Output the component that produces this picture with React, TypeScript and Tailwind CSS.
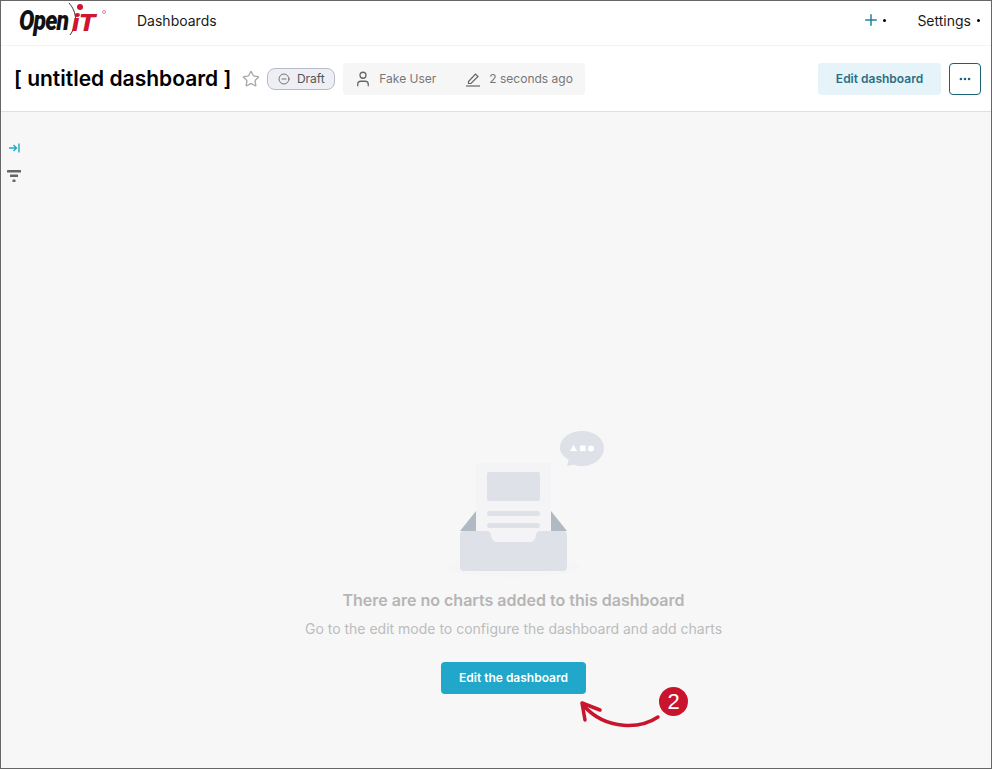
import React from "react";
import { Star, MinusCircle, User, Plus, Ellipsis } from "lucide-react";

function Caret({ className }: { className: string }) {
  return <span className={"inline-block w-[3px] h-[3px] rounded-full bg-black " + className} />;
}

function Logo() {
  return (
    <div className="relative w-[88px] h-[36px] select-none font-['Roboto',sans-serif] italic font-black">
      <span className="absolute left-0 top-[5px] text-[28px] tracking-[-1px] text-[#111] scale-x-[0.82] origin-left inline-block leading-none">Open</span>
      <svg className="absolute left-[49px] top-[0px]" width="12" height="34" viewBox="0 0 12 34" fill="none">
        <path d="M1 1C9 10 10 22 2 33" stroke="#333" strokeWidth="1" />
      </svg>
      <span className="absolute left-[53px] top-[9px] text-[24px] text-[#d0152f] leading-none tracking-[-0.5px] scale-x-[1.15] origin-left inline-block">iT</span>
      <span className="absolute left-[58px] top-[2px] w-[6px] h-[6px] rounded-full bg-[#d0152f]" />
      <span className="absolute left-[83px] top-[8px] w-[4px] h-[4px] rounded-full border border-[#e58a96]" />
    </div>
  );
}

function EmptyIllustration() {
  return (
    <svg width="180" height="160" viewBox="0 0 180 160" fill="none">
      <ellipse cx="73" cy="147" rx="67" ry="10" fill="#f5f5f5" />
      <path d="M20 111 L36 91 V111 Z" fill="#b0bac4" />
      <path d="M111 91 L127 111 H111 Z" fill="#b0bac4" />
      <rect x="36" y="43" width="75" height="84" fill="#f4f4f6" />
      <rect x="47" y="52" width="53" height="29" rx="2" fill="#dee1e8" />
      <rect x="47" y="91" width="53" height="5" rx="2.5" fill="#dee1e8" />
      <rect x="47" y="103" width="53" height="5" rx="2.5" fill="#dee1e8" />
      <path d="M20 115a4 4 0 0 1 4-4h23c2.500 0 3.500 1.500 4 4 .6 4 2.500 7 6 7h33c3.500 0 5.400-3 6-7 .5-2.500 1.500-4 4-4h23a4 4 0 0 1 4 4v32a4 4 0 0 1-4 4H24a4 4 0 0 1-4-4Z" fill="#dee1e8" />
      <path d="M142 11c12 0 22 7 22 17s-10 18-22 18c-3 0-6-.5-8-1.500l-7 1.800 1.700-6.500C123 36 120 33 120 28c0-10 10-17 22-17Z" fill="#dee1e8" />
      <path d="M133.500 25 L137 31 H130Z" fill="#fff" />
      <rect x="140" y="25.500" width="5.500" height="5.500" fill="#fff" />
      <circle cx="151" cy="28.500" r="3" fill="#fff" />
    </svg>
  );
}

export default function App() {
  return (
    <div className="w-[992px] h-[769px] border border-[#666] bg-[#f7f7f7] flex flex-col overflow-hidden font-['Inter',sans-serif] relative">
      <nav className="h-[45px] shrink-0 bg-white flex items-center border-b border-[#f5f2f2] pb-[6px]">
        <div className="ml-[18px]"><Logo /></div>
        <span className="ml-[30px] text-[14px] text-[#1a1a1a]">Dashboards</span>
        <div className="ml-auto flex items-center mr-[11px]">
          <Plus size={18} strokeWidth={2} className="text-[#20809f]" />
          <Caret className="ml-[3px]" />
          <span className="ml-[31px] text-[14px] text-[#1a1a1a]">Settings</span>
          <Caret className="ml-[6px]" />
        </div>
      </nav>
      <header className="h-[66px] shrink-0 bg-white border-b border-[#e0e0e0] flex items-center pl-[13px] pr-[10px]">
        <h1 className="text-[21px] font-semibold text-black whitespace-nowrap pt-[1px]">[ untitled dashboard ]</h1>
        <Star size={18} strokeWidth={1.8} className="ml-[11px] text-[#a8a8a8]" />
        <div className="ml-[7px] h-[22px] w-[68px] rounded-[8px] border border-[#b8bac8] bg-[#eeeff5] flex items-center justify-center gap-[7px]">
          <MinusCircle size={12} strokeWidth={1.6} className="text-[#555]" />
          <span className="text-[12px] text-[#555]">Draft</span>
        </div>
        <div className="ml-[8px] h-[32px] w-[242px] rounded-[4px] bg-[#f6f6f6] flex items-center text-[12px] text-[#767676]">
          <User size={18} strokeWidth={1.7} className="ml-[11px] text-[#666]" />
          <span className="ml-[7px]">Fake User</span>
          <svg className="ml-[29px]" width="16" height="16" viewBox="0 0 16 16" fill="none" stroke="#666" strokeWidth="1.2">
            <path d="M3.500 10.500 L10.500 3 L13 5.500 L6 12.500 H3.500 Z" />
            <path d="M1 15 H15" />
          </svg>
          <span className="ml-[8px]">2 seconds ago</span>
        </div>
        <button className="ml-auto h-[32px] w-[123px] rounded-[4px] bg-[#e6f3f8] text-[12px] font-semibold text-[#2a6f87]">Edit dashboard</button>
        <button className="ml-[8px] h-[32px] w-[32px] rounded-[4px] border border-[#1a6276] bg-white flex items-center justify-center">
          <Ellipsis size={14} strokeWidth={2.500} className="text-[#1a6276]" />
        </button>
      </header>
      <main className="flex-1 flex min-h-0">
        <aside className="w-[26px] shrink-0 flex flex-col items-center pt-[31px]">
          <svg width="13" height="10" viewBox="0 0 13 10" fill="none" stroke="#20a7c9" strokeWidth="1.4">
            <path d="M1 5 H8 M5.500 2 L8.500 5 L5.500 8 M11 0.500 V9.500" />
          </svg>
          <svg className="mt-[17px]" width="14" height="12" viewBox="0 0 14 12" fill="#666">
            <rect x="0" y="0" width="14" height="2.500" rx="0.500" />
            <rect x="3" y="4.500" width="8" height="2.500" rx="0.500" />
            <rect x="5.500" y="9.500" width="3" height="2.500" rx="0.500" />
          </svg>
        </aside>
        <section className="flex-1 flex flex-col items-center pt-[308px] pl-[10px] -ml-[1px]">
          <div className="h-[160px] ml-[32px]"><EmptyIllustration /></div>
          <h2 className="mt-[8px] text-[16px] font-semibold text-[#b5b5b5]">There are no charts added to this dashboard</h2>
          <p className="mt-[6px] text-[14px] text-[#bcbcbc]">Go to the edit mode to configure the dashboard and add charts</p>
          <button className="mt-[23px] h-[32px] w-[145px] rounded-[4px] bg-[#20a7c9] text-[12px] font-semibold text-white">Edit the dashboard</button>
        </section>
      </main>
      <svg className="absolute left-[571px] top-[689px]" width="90" height="42" viewBox="0 0 90 42" fill="none" stroke="#c8152d" strokeWidth="3.500" strokeLinecap="round" strokeLinejoin="round">
        <path d="M86 27 C70 38 35 42 11 15" />
        <path d="M10 13 L28 20 M10 13 L13 30" />
      </svg>
      <div className="absolute left-[658px] top-[686px] w-[29px] h-[29px] rounded-full bg-[#c8152d] flex items-center justify-center text-white text-[22px] font-['Liberation_Sans',sans-serif] leading-none">2</div>
    </div>
  );
}
